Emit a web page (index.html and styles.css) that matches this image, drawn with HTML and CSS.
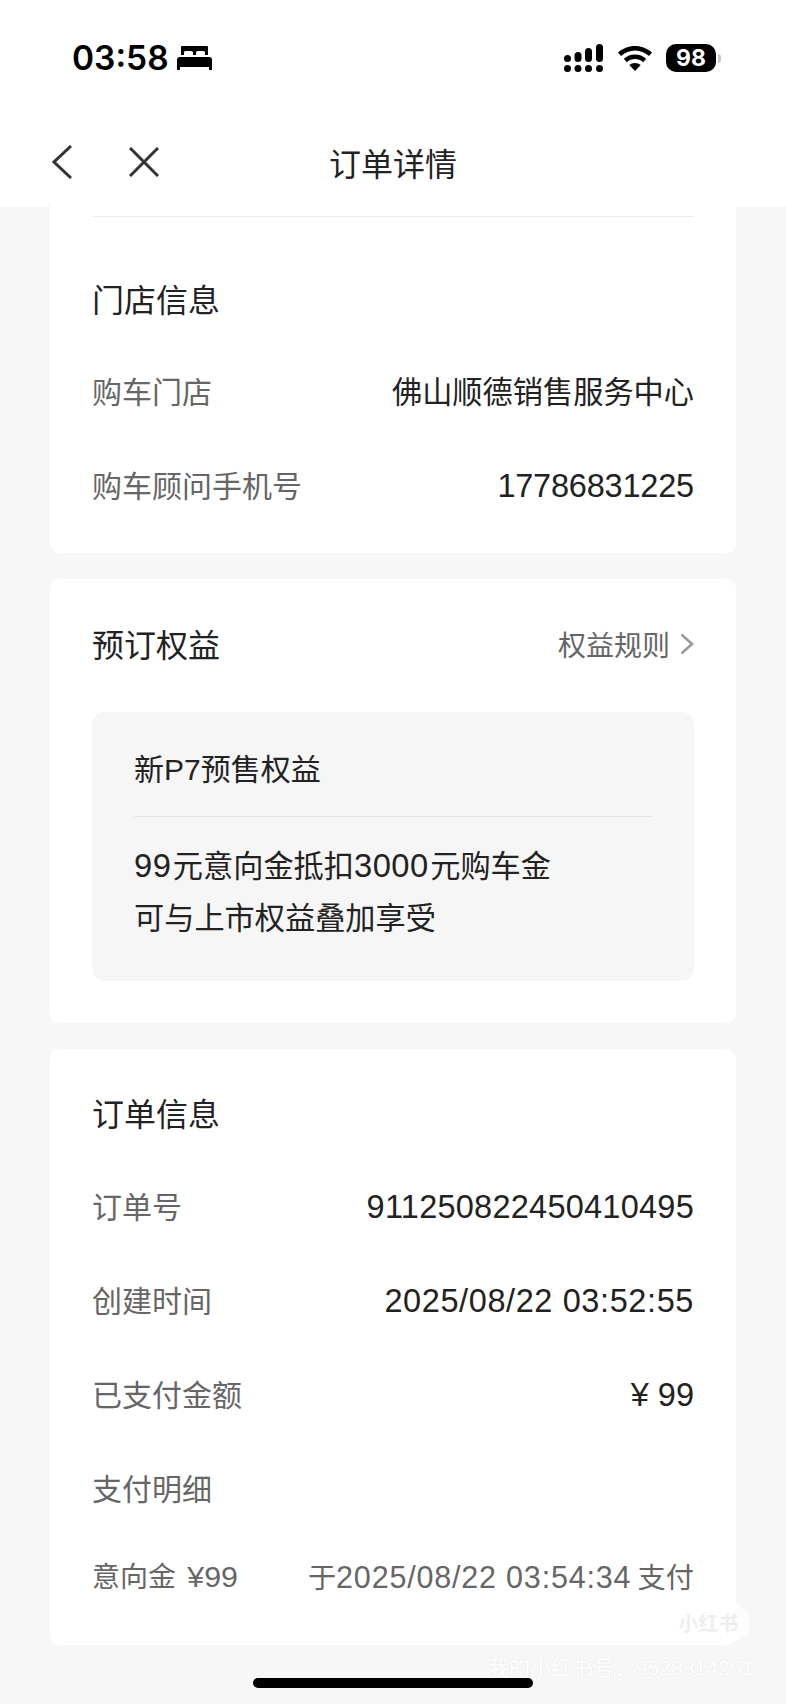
FILE: index.html
```html
<!DOCTYPE html>
<html lang="zh-CN">
<head>
    <meta charset="UTF-8">
    <meta name="viewport" content="width=device-width, initial-scale=1.0">
    <title>订单详情</title>
    <link rel="stylesheet" href="styles.css">
</head>
<body>
    <header class="top">
        <div class="status-bar">
            <div class="status-left">
                <span class="time">03:58</span>
                <svg class="bed" viewBox="0 0 35 24" aria-hidden="true">
                    <path d="M4 1.5a2 2 0 0 1 2-2h23a2 2 0 0 1 2 2V9h-3V6.5a1.5 1.5 0 0 0-1.5-1.5h-6A1.5 1.5 0 0 0 19 6.5V9h-3V6.5A1.500 1.500 0 0 0 14.500 5h-6A1.500 1.500 0 0 0 7 6.500V9H4z" fill="#000"/>
                    <path d="M3 11h29a3 3 0 0 1 3 3v10h-3v-3H3v3H0V14a3 3 0 0 1 3-3z" fill="#000"/>
                </svg>
            </div>
            <div class="status-right">
                <svg class="signal" viewBox="0 0 39 28" aria-hidden="true">
                    <rect x="0" y="11" width="7" height="7" rx="3.500"/>
                    <rect x="0" y="21" width="7" height="7" rx="3.500"/>
                    <rect x="10.500" y="8" width="7" height="10" rx="3.500"/>
                    <rect x="10.500" y="21" width="7" height="7" rx="3.500"/>
                    <rect x="21" y="4" width="7" height="14" rx="3.500"/>
                    <rect x="21" y="21" width="7" height="7" rx="3.500"/>
                    <rect x="32" y="0" width="7" height="18" rx="3.500"/>
                    <rect x="32" y="21" width="7" height="7" rx="3.500"/>
                </svg>
                <svg class="wifi" viewBox="0 0 34 25" aria-hidden="true">
                    <path d="M17 0C10.500 0 4.700 2.500 0 6.500l3 3.500C7 6.700 11.800 4.600 17 4.600s10 2.100 14 5.400l3-3.500C29.300 2.500 23.500 0 17 0z"/>
                    <path d="M17 8.500c-4.300 0-8.100 1.600-11.200 4.200l3 3.500c2.300-1.900 5.100-3.100 8.200-3.100s5.900 1.200 8.200 3.100l3-3.500C25.100 10.100 21.300 8.500 17 8.500z"/>
                    <path d="M17 17c-2.200 0-4.100.8-5.700 2.100L17 25l5.700-5.900C21.100 17.800 19.200 17 17 17z"/>
                </svg>
                <div class="battery"><span class="battery-level">98</span></div>
                <span class="battery-nub"></span>
            </div>
        </div>
        <nav class="nav">
            <div class="nav-icons">
                <svg class="nav-back" viewBox="0 0 20 34" aria-hidden="true"><path d="M19 1 2 17l17 16"/></svg>
                <svg class="nav-close" viewBox="0 0 30 30" aria-hidden="true"><path d="M1 1l28 28M29 1 1 29"/></svg>
            </div>
            <h1 class="nav-title">订单详情</h1>
            <div></div>
        </nav>
    </header>

    <main class="content">
        <section class="card card-store">
            <div class="rule"></div>
            <h2 class="card-title">门店信息</h2>
            <div class="row"><span class="label">购车门店</span><span class="value">佛山顺德销售服务中心</span></div>
            <div class="row"><span class="label">购车顾问手机号</span><span class="value num num-phone">17786831225</span></div>
        </section>

        <section class="card card-rights">
            <div class="card-head">
                <h2 class="card-title">预订权益</h2>
                <span class="rules-link">权益规则
                    <svg class="chevron" viewBox="0 0 14 22" aria-hidden="true"><path d="M1.500 1.500 12 11 1.500 20.500"/></svg>
                </span>
            </div>
            <div class="rights-box">
                <div class="rights-name">新<span class="num">P7</span>预售权益</div>
                <div class="rights-rule"></div>
                <p class="rights-text"><span class="num">99</span>元意向金抵扣<span class="num">3000</span>元购车金<br>可与上市权益叠加享受</p>
            </div>
        </section>

        <section class="card card-order">
            <h2 class="card-title">订单信息</h2>
            <div class="row"><span class="label">订单号</span><span class="value num num-order">911250822450410495</span></div>
            <div class="row"><span class="label">创建时间</span><span class="value num num-date">2025/08/22 03:52:55</span></div>
            <div class="row"><span class="label">已支付金额</span><span class="value num">¥ 99</span></div>
            <div class="row"><span class="label">支付明细</span></div>
            <div class="row row-last"><span class="label label-deposit">意向金 <span class="num">¥99</span></span><span class="value value-muted">于<span class="num num-paid">2025/08/22 03:54:34</span> 支付</span></div>
        </section>
    </main>

    <div class="wm-badge">小红书</div>
    <div class="wm-id">我的小红书号：9528314251</div>
    <div class="home-bar"></div>
</body>
</html>
```

FILE: styles.css
```css
* {
    box-sizing: border-box;
}

body {
    margin: 0;
    width: 786px;
    height: 1704px;
    overflow: hidden;
    position: relative;
    background-color: #f7f7f7;
    color: #222;
    font-family: "Noto Sans CJK SC", sans-serif;
}

/* digits run a bit larger than the chinese text around them */
.num {
    font-family: "Liberation Sans", sans-serif;
    font-size: 1.083em;
    line-height: 1;
}

.num-phone {
    letter-spacing: -0.2px;
}

.num-order {
    letter-spacing: 0.25px;
}

.num-date {
    letter-spacing: 0.6px;
}

.num-paid {
    letter-spacing: 0.8px;
}

.top {
    height: 206px;
    background-color: #fff;
}

.status-bar {
    height: 116px;
    padding: 44px 65px 0 72px;
    display: flex;
    justify-content: space-between;
    align-items: flex-start;
}

.status-left {
    display: flex;
    align-items: center;
    gap: 8px;
    height: 28px;
}

.time {
    font-family: Inter, sans-serif;
    font-feature-settings: "case";
    font-size: 33.5px;
    font-weight: 600;
    color: #000;
    line-height: 28px;
}

.bed {
    width: 35px;
    height: 24px;
}

.status-right {
    display: flex;
    align-items: center;
    height: 28px;
}

.signal {
    width: 39px;
    height: 28px;
    fill: #000;
}

.wifi {
    width: 34px;
    height: 25px;
    margin-left: 15px;
    fill: #000;
}

.battery {
    width: 50px;
    height: 28px;
    margin-left: 14px;
    border-radius: 10px;
    background-color: #000;
    color: #fff;
    display: flex;
    align-items: center;
    justify-content: center;
}

.battery-level {
    font-family: Inter, sans-serif;
    font-size: 23px;
    font-weight: 700;
    line-height: 28px;
}

.battery-nub {
    width: 3px;
    height: 9px;
    margin-left: 2px;
    border-radius: 0 3px 3px 0;
    background-color: #c8c8c8;
}

.nav {
    height: 90px;
    display: grid;
    grid-template-columns: 1fr auto 1fr;
    align-items: center;
    padding-top: 2px;
}

.nav-icons {
    display: flex;
    align-items: center;
    padding-left: 52px;
    gap: 57px;
}

.nav-back {
    width: 20px;
    height: 34px;
    fill: none;
    stroke: #333;
    stroke-width: 3;
}

.nav-close {
    width: 30px;
    height: 30px;
    fill: none;
    stroke: #333;
    stroke-width: 3;
}

.nav-title {
    margin: 0;
    font-size: 32px;
    font-weight: 400;
    line-height: 44px;
    padding-bottom: 1px;
    color: #222;
}

.content {
    padding: 0 50px;
    display: flex;
    flex-direction: column;
    gap: 26px;
}

.card {
    background-color: #fff;
    padding: 20px 42px;
    border-radius: 0 0 10px 10px;
}

.card-rights,
.card-order {
    border-radius: 10px;
}

.card-store {
    height: 347px;
    padding-top: 10px;
}

.card-rights {
    height: 444px;
    padding-top: 19px;
}

.card-order {
    height: 596px;
    padding-top: 19px;
}

.rule {
    height: 1px;
    background-color: #ececec;
    margin-bottom: 36px;
}

.card-title {
    margin: 0;
    height: 94px;
    font-size: 32px;
    font-weight: 400;
    line-height: 90px;
    color: #222;
}

.card-order .card-title {
    line-height: 88px;
}

.row {
    height: 94px;
    padding-bottom: 8px;
    display: flex;
    justify-content: space-between;
    align-items: center;
    font-size: 30px;
}

.row-last {
    height: 82px;
    font-size: 28px;
}

.label {
    color: #666;
}

.label-deposit {
    word-spacing: 5px;
}

.value {
    color: #222;
    font-size: 1.007em;
}

.value.num {
    font-size: 32.5px;
    margin-bottom: -4px;
}

.value-muted {
    color: #666;
}

.card-head {
    display: flex;
    justify-content: space-between;
    align-items: center;
    margin-bottom: 20px;
}

.rules-link {
    display: flex;
    align-items: center;
    gap: 10px;
    font-size: 28px;
    line-height: 40px;
    padding-bottom: 3px;
    color: #666;
}

.chevron {
    width: 14px;
    height: 22px;
    fill: none;
    stroke: #999;
    stroke-width: 2.500;
}

.rights-box {
    height: 269px;
    background-color: #f6f6f6;
    border-radius: 12px;
    padding: 0 42px;
}

.rights-name {
    height: 104px;
    font-size: 30px;
    line-height: 110px;
    color: #222;
}

.rights-name .num {
    font-size: 1em;
}

.rights-rule {
    height: 1px;
    background-color: #e6e6e6;
}

.rights-text {
    margin: 21px 0 0;
    font-size: 30.2px;
    line-height: 52px;
    color: #222;
}

.rights-text .num {
    margin-right: 1.5px;
    letter-spacing: 0.5px;
}

.wm-badge {
    position: absolute;
    left: 667px;
    top: 1603px;
    width: 83px;
    height: 39px;
    border-radius: 20px;
    background-color: rgba(255, 255, 255, 0.7);
    color: #eeeeee;
    font-size: 20px;
    font-weight: 700;
    line-height: 39px;
    text-align: center;
    filter: blur(0.6px);
}

.wm-id {
    position: absolute;
    left: 488px;
    top: 1654px;
    font-family: "Liberation Sans", "Noto Sans CJK SC", sans-serif;
    font-size: 21px;
    letter-spacing: 0.1px;
    line-height: 28px;
    white-space: nowrap;
    color: #fff;
    text-shadow: 0 0 2px #e4e4e4;
}

.home-bar {
    position: absolute;
    left: 253px;
    top: 1678px;
    width: 280px;
    height: 10px;
    border-radius: 5px;
    background-color: #000;
}
```
